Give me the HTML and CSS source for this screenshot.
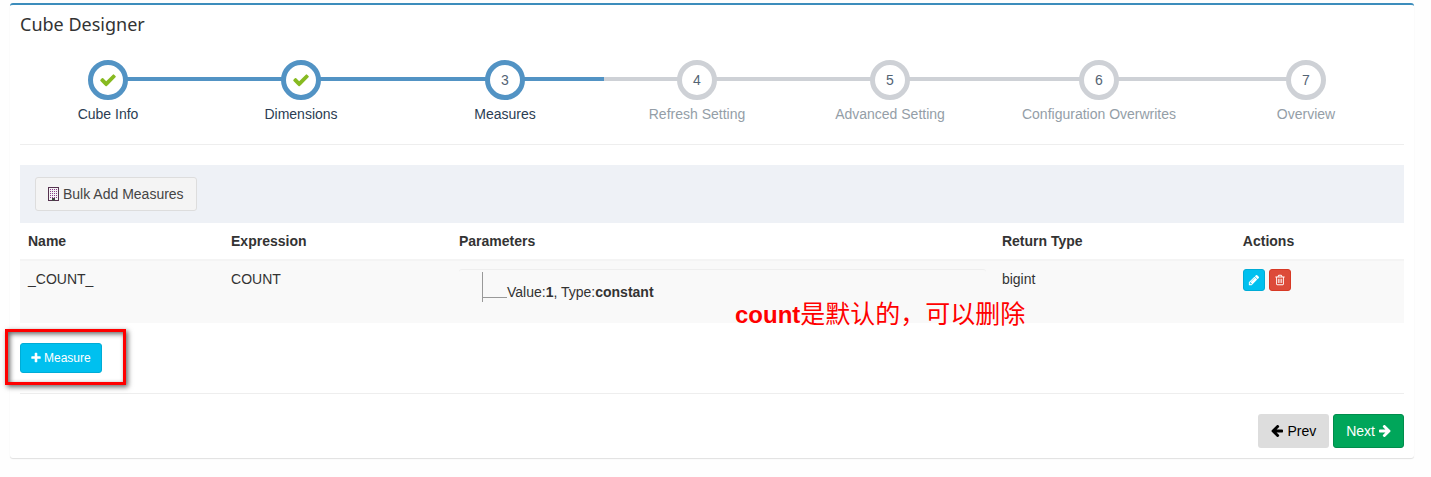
FILE: index.html
```html
<!DOCTYPE html>
<html lang="en">
<head>
<meta charset="utf-8">
<title>Cube Designer</title>
<link rel="stylesheet" href="styles.css">
</head>
<body>
<svg class="sprite" aria-hidden="true">
  <symbol id="check" viewBox="0 0 1792 1792"><path d="M1671 566q0 40-28 68l-724 724-136 136q-28 28-68 28t-68-28l-136-136-362-362q-28-28-28-68t28-68l136-136q28-28 68-28t68 28l294 295 656-657q28-28 68-28t68 28l136 136q28 28 28 68z"/></symbol>
  <symbol id="plus" viewBox="192 0 1408 1792"><path d="M1600 736v192q0 40-28 68t-68 28h-416v416q0 40-28 68t-68 28h-192q-40 0-68-28t-28-68v-416h-416q-40 0-68-28t-28-68v-192q0-40 28-68t68-28h416v-416q0-40 28-68t68-28h192q40 0 68 28t28 68v416h416q40 0 68 28t28 68z"/></symbol>
  <symbol id="arrow" viewBox="128 192 1536 1664"><path d="M1664 896v128q0 53-32.500 90.500t-84.500 37.500h-704l293 294q38 36 38 90t-38 90l-75 76q-37 37-90 37-52 0-91-37l-651-652q-37-37-37-90 0-52 37-91l651-650q38-38 91-38 52 0 90 38l75 74q38 38 38 91t-38 91l-293 293h704q52 0 84.500 37.500t32.500 90.500z"/></symbol>
  <symbol id="pencil" viewBox="0 0 1792 1792"><path d="M491 1536l91-91-235-235-91 91v107h128v128h107zm523-928q0-22-22-22-10 0-17 7l-542 542q-7 7-7 17 0 22 22 22 10 0 17-7l542-542q7-7 7-17zm-54-192l416 416-832 832h-416v-416zm683 96q0 53-37 90l-166 166-416-416 166-165q36-38 90-38 53 0 91 38l235 234q37 39 37 91z"/></symbol>
  <symbol id="trash" viewBox="0 0 1792 1792"><path d="M704 736v576q0 14-9 23t-23 9h-64q-14 0-23-9t-9-23v-576q0-14 9-23t23-9h64q14 0 23 9t9 23zm256 0v576q0 14-9 23t-23 9h-64q-14 0-23-9t-9-23v-576q0-14 9-23t23-9h64q14 0 23 9t9 23zm256 0v576q0 14-9 23t-23 9h-64q-14 0-23-9t-9-23v-576q0-14 9-23t23-9h64q14 0 23 9t9 23zm128 724v-948h-896v948q0 22 7 40.500t14.500 27 10.500 8.500h832q3 0 10.500-8.500t14.500-27 7-40.500zm-672-1076h448l-48-117q-7-9-17-11h-317q-10 2-17 11zm928 32v64q0 14-9 23t-23 9h-96v948q0 83-47 143.500t-113 60.500h-832q-66 0-113-58.500t-47-141.500v-952h-96q-14 0-23-9t-9-23v-64q0-14 9-23t23-9h309l70-167q15-37 54-63t79-26h320q40 0 79 26t54 63l70 167h309q14 0 23 9t9 23z"/></symbol>
</svg>
<main class="box">
  <h1 class="title">Cube Designer</h1>
  <ol class="steps">
    <li class="step done"><span class="dot"><svg class="icon-check"><use href="#check"/></svg></span><span class="label">Cube Info</span></li>
    <li class="step done"><span class="dot"><svg class="icon-check"><use href="#check"/></svg></span><span class="label">Dimensions</span></li>
    <li class="step done" aria-current="step"><span class="dot">3</span><span class="label">Measures</span></li>
    <li class="step"><span class="dot">4</span><span class="label">Refresh Setting</span></li>
    <li class="step"><span class="dot">5</span><span class="label">Advanced Setting</span></li>
    <li class="step"><span class="dot">6</span><span class="label">Configuration Overwrites</span></li>
    <li class="step"><span class="dot">7</span><span class="label">Overview</span></li>
  </ol>
  <section class="measures">
    <div class="toolbar">
      <button type="button" class="btn btn-default">
        <svg class="icon-building" viewBox="0 0 11 14" shape-rendering="crispEdges"><path fill="none" stroke="#55334f" d="M.5.5h10v13H.5z"/><path fill="none" stroke="#8a3d8a" stroke-dasharray="1 1" d="M2 2.500h7M2 4.500h7M2 6.500h7M2 8.500h7M2 10.500h7"/><path fill="#444" d="M4 11h3v3H4z"/></svg>
        Bulk Add Measures
      </button>
    </div>
    <table class="grid">
      <colgroup><col class="c-name"><col class="c-expr"><col class="c-param"><col class="c-type"><col class="c-act"></colgroup>
      <thead><tr><th>Name</th><th>Expression</th><th>Parameters</th><th>Return Type</th><th>Actions</th></tr></thead>
      <tbody>
        <tr>
          <td>_COUNT_</td>
          <td>COUNT</td>
          <td><div class="well"><div class="branch"><span class="tick"></span><span class="param">Value:<b>1</b>, Type:<b>constant</b></span></div></div></td>
          <td>bigint</td>
          <td><div class="actions">
            <button type="button" class="btn btn-xs btn-info" aria-label="Edit"><svg class="icon-xs"><use href="#pencil"/></svg></button>
            <button type="button" class="btn btn-xs btn-danger" aria-label="Delete"><svg class="icon-xs"><use href="#trash"/></svg></button>
          </div></td>
        </tr>
      </tbody>
    </table>
    <p class="note">count<span class="note-zh" lang="zh">是默认的，可以删除</span></p>
  </section>
  <div class="add">
    <button type="button" class="btn btn-sm btn-info"><svg class="icon-plus"><use href="#plus"/></svg>Measure</button>
    <span class="highlight"></span>
  </div>
  <footer class="footer">
    <button type="button" class="btn btn-prev"><svg class="icon-arrow"><use href="#arrow"/></svg>Prev</button>
    <button type="button" class="btn btn-next">Next<svg class="icon-arrow flip"><use href="#arrow"/></svg></button>
  </footer>
</main>
</body>
</html>
```

FILE: styles.css
```css
* { box-sizing: border-box; }
body {
  margin: 0;
  padding: 3px 17px 16px 10px;
  background: #fefefe;
  color: #333;
  font: 14px/20px "Liberation Sans", Arial, sans-serif;
}
.sprite { display: none; }
.box {
  padding: 10px 10px;
  background: #fff;
  border-top: 2px solid #3c8dbc;
  border-radius: 3px;
  box-shadow: 0 1px 1px rgba(0, 0, 0, .12);
}
.title {
  margin: 0;
  color: #333;
  font: 400 18px/18px "Noto Sans", "Open Sans", sans-serif;
}

/* Wizard steps */
.steps {
  display: grid;
  grid-template-columns: 176fr 210fr 198fr 186fr 200fr 218fr 196fr;
  margin: 0;
  padding: 27px 0 20px;
  border-bottom: 1px solid #eee;
  list-style: none;
}
.step {
  position: relative;
  display: flex;
  flex-direction: column;
  align-items: center;
  gap: 4px;
  color: #949ea7;
}
.step::before {
  content: "";
  position: absolute;
  top: 17px;
  left: 0;
  width: 100%;
  height: 4px;
  background: #ced1d6;
}
.step:first-child::before { left: 50%; width: 50%; }
.step:last-child::before { width: 50%; }
.dot {
  position: relative;
  display: flex;
  align-items: center;
  justify-content: center;
  width: 40px;
  height: 40px;
  border: 5px solid #ced1d6;
  border-radius: 50%;
  background: #fff;
  color: #546474;
  font-size: 14px;
}
.done { color: #2b3d53; }
.done::before { background: #5293c4; }
.done .dot { border-color: #5293c4; }
.icon-check { width: 18px; height: 18px; fill: #87ba21; }

/* Buttons */
.btn {
  display: inline-flex;
  align-items: center;
  justify-content: center;
  gap: 4px;
  padding: 6px 12px;
  border: 1px solid transparent;
  border-radius: 3px;
  font: inherit;
}
.btn svg { fill: currentColor; }
.btn-default { border-color: #ddd; background: #f4f4f4; color: #444; }
.btn-info { border-color: #00acd6; background: #00c0ef; color: #fff; }
.btn-danger { border-color: #d73925; background: #dd4b39; color: #fff; }
.btn-sm { gap: 3px; padding: 5px 10px; font-size: 12px; line-height: 18px; }
.btn-xs { width: 22px; height: 22px; padding: 0; }
.btn-prev { background: #ddd; color: #000; }
.btn-next { border-color: #008d4c; background: #00a65a; color: #fff; }
.icon-building { width: 11px; height: 14px; }
.icon-xs { width: 12px; height: 12px; }
.icon-plus { width: 10px; height: 12px; }
.icon-arrow { width: 12px; height: 13px; }
.flip { transform: scaleX(-1); }

/* Measures table */
.measures { position: relative; margin-top: 20px; }
.toolbar { padding: 12px 15px; background: #eef1f6; }
.grid {
  width: 100%;
  border-collapse: collapse;
  table-layout: fixed;
}
.c-name { width: 14.67%; }
.c-expr { width: 16.47%; }
.c-param { width: 39.23%; }
.c-type { width: 17.41%; }
.grid th, .grid td { padding: 8px; text-align: left; vertical-align: top; }
.grid thead th { border-bottom: 2px solid #f4f4f4; }
.grid tbody tr { background: #f9f9f9; }
.well {
  padding: 2px 0 13px 23px;
  border-top: 1px solid #eee;
  border-radius: 3px;
}
.branch { display: flex; border-left: 1px solid #999; }
.tick { width: 24px; height: 26px; border-bottom: 1px solid #999; }
.param { padding: 10px 0 0; }
.actions { display: flex; gap: 4px; }
.note {
  position: absolute;
  bottom: -6px;
  left: 51.66%;
  margin: 0;
  color: #f00;
  font: 700 24px/28px "Liberation Sans", Arial, sans-serif;
  white-space: nowrap;
}
.note-zh { font: 400 25px/28px "Noto Sans CJK SC", sans-serif; }

/* Add button with its call-out frame */
.add { position: relative; display: flex; padding: 20px 0; border-bottom: 1px solid #eee; }
.highlight {
  position: absolute;
  top: 6px;
  left: -15px;
  width: 121px;
  height: 56px;
  border: 3px solid #f00;
  box-shadow: 2px 2px 5px rgba(0, 0, 0, .6), inset 2px 2px 5px rgba(0, 0, 0, .6);
  pointer-events: none;
}
.footer { display: flex; justify-content: flex-end; gap: 4px; padding-top: 20px; }
```
